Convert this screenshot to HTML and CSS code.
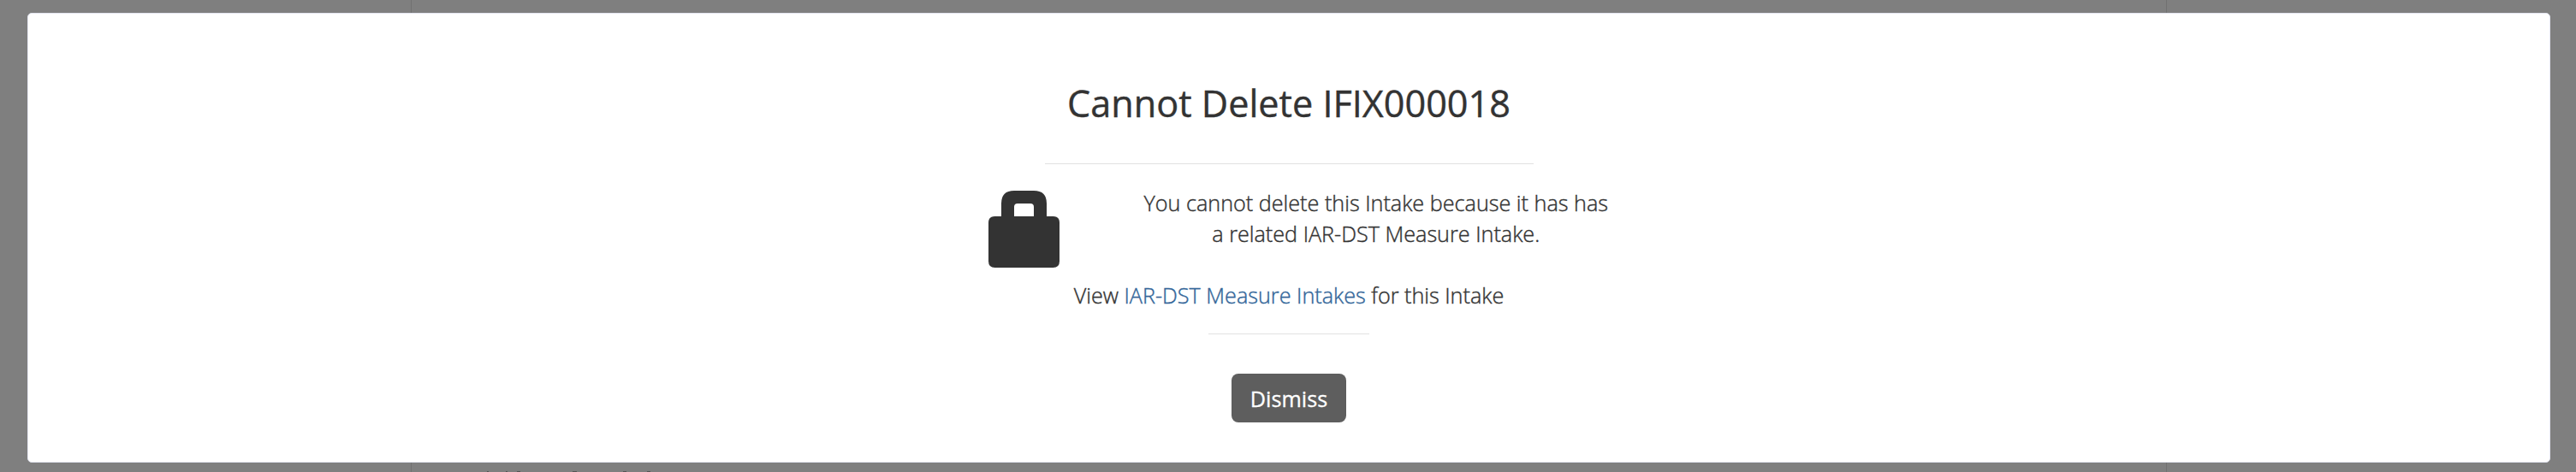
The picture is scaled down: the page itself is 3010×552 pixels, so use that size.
FILE: index.html
```
<!DOCTYPE html>
<html lang="en">
<head>
<meta charset="utf-8">
<title>Cannot Delete</title>
<link rel="stylesheet" href="styles.css">
</head>
<body>
<div class="backdrop">
  <div class="page-column"></div>
  <svg class="page-edge" viewBox="0 0 200 1" aria-hidden="true"><path d="M3 0h2v1h-2zM25 0h2v1h-2zM38 0h4v1h-4zM103 0h5v1h-5zM162 0h4v1h-4zM190 0h4v1h-4z"/></svg>
  <main class="dialog" role="dialog" aria-labelledby="title">
    <h1 class="title" id="title">Cannot Delete IFIX000018</h1>
    <hr class="rule rule-wide">
    <div class="message">
      <svg class="lock" viewBox="0 0 84 90" aria-hidden="true"><path fill-rule="evenodd" d="M15 30V15Q15 0 30 0H53Q68 0 68 15V30H75.500Q83 30 83 37.500V82.500Q83 90 75.500 90H7.500Q0 90 0 82.500V37.500Q0 30 7.500 30ZM30 30H53V19Q53 15 49 15H34Q30 15 30 19Z"/></svg>
      <p class="text">You cannot delete this Intake because it has has<br>a related IAR-DST Measure Intake.</p>
    </div>
    <p class="text view">View <a class="link">IAR-DST Measure Intakes</a> for this Intake</p>
    <hr class="rule rule-short">
    <button class="button">Dismiss</button>
  </main>
</div>
</body>
</html>
```
FILE: styles.css
```
* { box-sizing: border-box; }
body { margin: 0; font-family: "Open Sans", sans-serif; color: #333; }
.backdrop { position: relative; height: 552px; padding: 15px 30px 11px 32px; background: #7f7f7f; overflow: hidden; }
.page-column { position: absolute; top: 0; bottom: 0; left: 480px; width: 2052px; border: solid #717171; border-width: 0 1px; }
.page-edge { position: absolute; left: 566px; bottom: 0; width: 200px; height: 1px; fill: #555; }
.dialog { position: relative; height: 526px; display: flex; flex-direction: column; align-items: center; background: #fff; border: 1px solid #e3e5f0; border-radius: 5px; }
.title { margin: 75px 0 0; font-size: 43.2px; line-height: 60px; font-weight: 400; white-space: nowrap; -webkit-text-stroke: 0.4px currentColor; }
.rule { height: 1px; margin: 0; border: 0; background: #e2e2e2; }
.rule-wide { width: 571px; margin-top: 40px; }
.message { display: flex; gap: 98px; margin: 27px 0 0 22px; width: 725px; }
.lock { width: 84px; height: 90px; margin-top: 4px; flex: none; fill: #333; }
.text { margin: 0; font-size: 25.2px; line-height: 36px; font-weight: 300; text-align: center; white-space: nowrap; -webkit-text-stroke: 0.4px currentColor; }
.view { margin-top: 14px; }
.link { color: #336699; }
.rule-short { width: 188px; margin-top: 27px; }
.button { width: 134px; height: 57px; margin-top: 46px; padding: 0; border: 0; border-radius: 8px; background: #5e5e5e; color: #fff; font: 400 25.2px/58px "Open Sans", sans-serif; -webkit-text-stroke: 0.3px currentColor; }
```
